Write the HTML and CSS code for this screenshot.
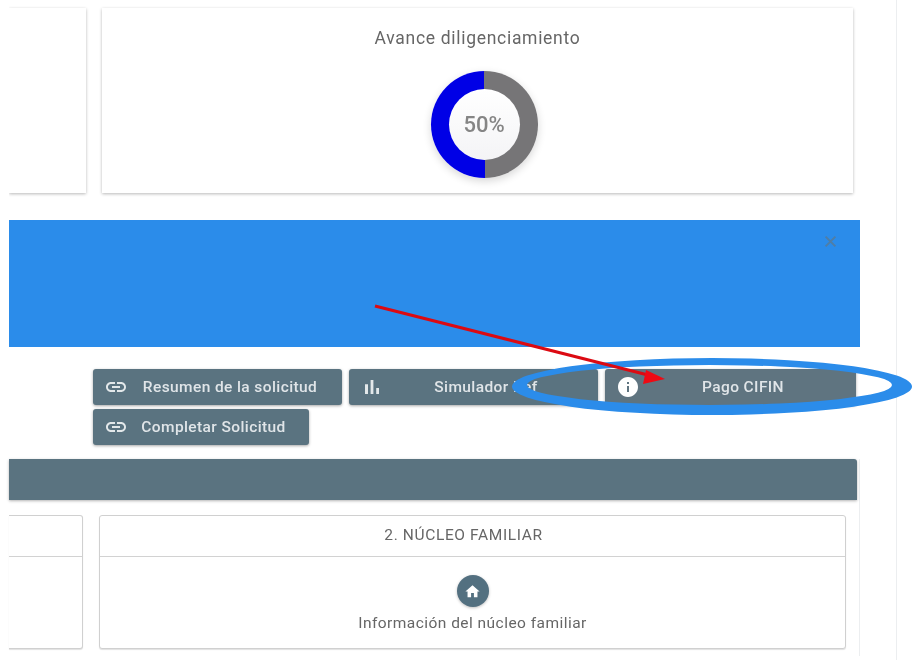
FILE: index.html
```html
<!DOCTYPE html>
<html lang="es">
<head>
<meta charset="utf-8">
<title>Solicitud</title>
<link rel="stylesheet" href="styles.css">
</head>
<body>
<div class="page">
  <main class="main">
    <section class="cards">
      <div class="card card-side"></div>
      <div class="card card-progress">
        <h2 class="card-title">Avance diligenciamiento</h2>
        <div class="donut"><div class="donut-hole">50%</div></div>
      </div>
    </section>

    <section class="banner">
      <svg class="banner-close" viewBox="0 0 12 12" aria-hidden="true"><path d="M1.5 1.5l9 9M10.5 1.5l-9 9"/></svg>
    </section>

    <section class="actions">
      <a class="btn btn-a"><svg class="btn-icon" viewBox="0 0 24 24"><path d="M3.9 12c0-1.71 1.39-3.1 3.1-3.1h4V7H7c-2.76 0-5 2.24-5 5s2.24 5 5 5h4v-1.9H7c-1.71 0-3.1-1.39-3.1-3.1zM8 13h8v-2H8v2zm9-6h-4v1.9h4c1.71 0 3.1 1.39 3.1 3.1s-1.39 3.1-3.1 3.1h-4V17h4c2.76 0 5-2.24 5-5s-2.24-5-5-5z"/></svg><span class="btn-text">Resumen de la solicitud</span></a>
      <a class="btn btn-a"><svg class="btn-icon" viewBox="0 0 24 24"><path d="M5 9.2h3V19H5zM10.6 5h2.8v14h-2.8zm5.6 8H19v6h-2.8z"/></svg><span class="btn-text">Simulador Ref</span></a>
      <a class="btn btn-b"><svg class="btn-icon btn-icon-info" viewBox="0 0 24 24"><path d="M12 2C6.48 2 2 6.48 2 12s4.48 10 10 10 10-4.48 10-10S17.52 2 12 2zm1 15h-2v-6h2v6zm0-8h-2V7h2v2z"/></svg><span class="btn-text">Pago CIFIN</span></a>
      <a class="btn btn-c"><svg class="btn-icon" viewBox="0 0 24 24"><path d="M3.9 12c0-1.71 1.39-3.1 3.1-3.1h4V7H7c-2.76 0-5 2.24-5 5s2.24 5 5 5h4v-1.9H7c-1.71 0-3.1-1.39-3.1-3.1zM8 13h8v-2H8v2zm9-6h-4v1.9h4c1.71 0 3.1 1.39 3.1 3.1s-1.39 3.1-3.1 3.1h-4V17h4c2.76 0 5-2.24 5-5s-2.24-5-5-5z"/></svg><span class="btn-text">Completar Solicitud</span></a>
    </section>

    <section class="section">
      <header class="section-bar"></header>
      <div class="panels">
        <article class="panel panel-side">
          <div class="panel-head"></div>
          <div class="panel-body"></div>
        </article>
        <article class="panel panel-main">
          <div class="panel-head">2. NÚCLEO FAMILIAR</div>
          <div class="panel-body">
            <span class="panel-icon"><svg viewBox="0 0 24 24"><path d="M10 20v-6h4v6h5v-8h3L12 3 2 12h3v8z"/></svg></span>
            <p class="panel-text">Información del núcleo familiar</p>
          </div>
        </article>
      </div>
    </section>
  </main>
  <aside class="rail"></aside>
</div>

<svg class="annotation" viewBox="0 0 917 660" aria-hidden="true">
  <path class="annotation-ring" fill-rule="evenodd" d="M512 386.5a200 28.5 0 1 0 400 0a200 28.5 0 1 0 -400 0zM527 385a182.5 20 0 1 0 365 0a182.5 20 0 1 0 -365 0z"/>
  <path class="annotation-line" d="M375 306L648 375"/>
  <path class="annotation-head" d="M665 379L643 384L646 370z"/>
</svg>
</body>
</html>
```

FILE: styles.css
```css
* { box-sizing: border-box; }

html, body {
  margin: 0;
  height: 100%;
  background: #fff;
  overflow: hidden;
}

body {
  font-family: Roboto, "Liberation Sans", sans-serif;
  color: #666;
}

.page {
  display: flex;
  height: 660px;
  filter: blur(0.6px);
}

.main {
  flex: 0 0 896px;
  padding: 8px 0 0 9px;
}

.rail {
  flex: 1;
  border-left: 1px solid #eceef0;
  background: #fff;
}

/* top cards */
.cards {
  display: flex;
  gap: 16px;
  height: 185px;
}

.card {
  background: #fff;
  box-shadow: 0 1px 3px rgba(0, 0, 0, .28);
}

.card-side { flex: 0 0 77px; clip-path: inset(-6px -6px -6px 0); }

.card-progress {
  flex: 0 0 751px;
  display: flex;
  flex-direction: column;
  align-items: center;
  padding-top: 20px;
}

.card-title {
  margin: 0 0 23px;
  font-size: 17.5px;
  font-weight: 400;
  line-height: 20px;
  letter-spacing: .7px;
  color: #666;
}

.donut {
  width: 107px;
  height: 107px;
  margin-left: 13px;
  border-radius: 50%;
  background: conic-gradient(#767577 0 50%, #0000e6 50% 100%);
  box-shadow: 0 3px 8px rgba(0, 0, 0, .16);
  display: flex;
  align-items: center;
  justify-content: center;
}

.donut-hole {
  width: 71px;
  height: 71px;
  border-radius: 50%;
  background: linear-gradient(#fff, #f4f4f6);
  display: flex;
  align-items: center;
  justify-content: center;
  font-size: 22px;
  font-weight: 500;
  color: #858585;
}

/* banner */
.banner {
  margin-top: 27px;
  width: 851px;
  height: 127px;
  background: #2b8cea;
  display: flex;
  justify-content: flex-end;
  padding: 15px 23px 0 0;
}

.banner-close {
  width: 13px;
  height: 13px;
  fill: none;
  stroke: #4f7ea6;
  stroke-width: 1.8;
}

/* actions */
.actions {
  margin-top: 22px;
  padding-left: 84px;
  width: 851px;
  display: flex;
  flex-wrap: wrap;
  column-gap: 7px;
  row-gap: 4px;
}

.btn {
  height: 36px;
  display: flex;
  align-items: center;
  padding: 0 10px 0 11px;
  border-radius: 3px;
  background: #5a7380;
  color: #e0e5e8;
  font-size: 15.5px;
  font-weight: 500;
  letter-spacing: .4px;
  box-shadow: 0 1px 3px rgba(0, 0, 0, .35);
}

.btn-a { flex: 0 0 249px; }
.btn-b { flex: 0 0 251px; background: #5f7480; }
.btn-c { flex: 0 0 216px; }

.btn-icon {
  flex: none;
  width: 24px;
  height: 24px;
  fill: #e3e8ea;
}

.btn-icon-info { fill: #fff; }

.btn-text {
  flex: 1;
  text-align: center;
  white-space: nowrap;
}

/* section */
.section {
  margin-top: 14px;
  width: 851px;
  height: 197px;
  border-right: 1px solid #eceef0;
}

.section-bar {
  width: 848px;
  height: 41px;
  background: #5a7380;
  border-radius: 0 3px 0 0;
  box-shadow: 0 1px 3px rgba(0, 0, 0, .3);
}

.panels {
  display: flex;
  gap: 16px;
  margin-top: 15px;
}

.panel {
  height: 134px;
  background: #fff;
  border: 1px solid #d0d0d0;
  border-radius: 3px;
  box-shadow: 0 1px 1px rgba(0, 0, 0, .12);
  display: flex;
  flex-direction: column;
}

.panel-side {
  flex: 0 0 74px;
  border-left: 0;
  border-radius: 0 3px 3px 0;
}

.panel-main { flex: 0 0 747px; }

.panel-head {
  height: 41px;
  flex: none;
  border-bottom: 1px solid #d2d2d2;
  display: flex;
  align-items: center;
  justify-content: center;
  padding: 0 18px 2px 0;
  font-size: 15.5px;
  letter-spacing: .63px;
  color: #666;
}

.panel-body {
  flex: 1;
  display: flex;
  flex-direction: column;
  align-items: center;
  padding-top: 18px;
}

.panel-icon {
  width: 32px;
  height: 32px;
  border-radius: 50%;
  background: #537080;
  display: flex;
  align-items: center;
  justify-content: center;
  box-shadow: 0 1px 3px rgba(0, 0, 0, .25);
}

.panel-icon svg {
  width: 17px;
  height: 17px;
  fill: #fff;
}

.panel-text {
  margin: 6px 0 0;
  font-size: 15.5px;
  line-height: 20px;
  letter-spacing: .46px;
  color: #666;
}

/* annotation drawn over the screenshot */
.annotation {
  position: absolute;
  left: 0;
  top: 0;
  width: 917px;
  height: 660px;
  pointer-events: none;
}

.annotation-ring { fill: #2b8cea; }

.annotation-line {
  fill: none;
  stroke: #dc0a12;
  stroke-width: 3;
}

.annotation-head { fill: #ee0a14; }
```
